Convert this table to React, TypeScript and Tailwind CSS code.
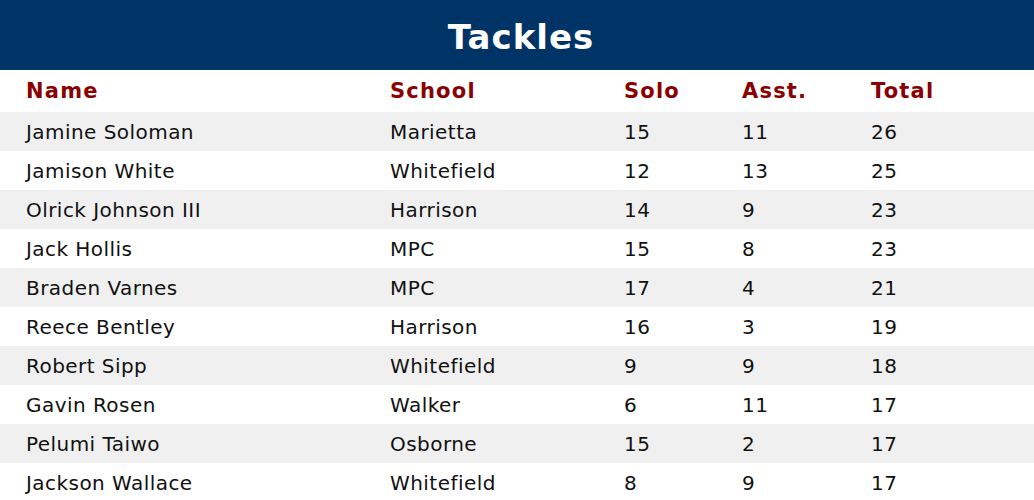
const rows = [
  ["Jamine Soloman", "Marietta", "15", "11", "26"],
  ["Jamison White", "Whitefield", "12", "13", "25"],
  ["Olrick Johnson III", "Harrison", "14", "9", "23"],
  ["Jack Hollis", "MPC", "15", "8", "23"],
  ["Braden Varnes", "MPC", "17", "4", "21"],
  ["Reece Bentley", "Harrison", "16", "3", "19"],
  ["Robert Sipp", "Whitefield", "9", "9", "18"],
  ["Gavin Rosen", "Walker", "6", "11", "17"],
  ["Pelumi Taiwo", "Osborne", "15", "2", "17"],
  ["Jackson Wallace", "Whitefield", "8", "9", "17"],
];

const headers = ["Name", "School", "Solo", "Asst.", "Total"];

export default function App() {
  return (
    <div className="w-[1034px] bg-white font-['DejaVu_Sans',sans-serif]">
      <div className="h-[70px] bg-[#003366] flex items-center justify-center pt-[3px] pl-[8px]">
        <h1 className="text-white font-bold text-[34px] tracking-[1px] leading-none">Tackles</h1>
      </div>
      <table className="w-full border-collapse table-fixed">
        <colgroup>
          <col className="w-[390px]" />
          <col className="w-[234px]" />
          <col className="w-[118px]" />
          <col className="w-[129px]" />
          <col />
        </colgroup>
        <thead>
          <tr className="h-[42px]">
            {headers.map((h, i) => (
              <th
                key={h}
                className={`text-left font-bold text-[21px] tracking-[1.2px] text-[#8b0000] pt-[2px] ${i === 0 ? "pl-[26px]" : ""}`}
              >
                {h}
              </th>
            ))}
          </tr>
        </thead>
        <tbody>
          {rows.map((r, idx) => (
            <tr key={r[0]} className={`h-[39px] ${idx % 2 === 0 ? "bg-[#f0f0f0]" : "bg-white"}`}>
              {r.map((c, i) => (
                <td key={i} className={`text-[20px] tracking-[0.45px] text-[#111] ${i === 0 ? "pl-[26px]" : ""}`}>
                  {c}
                </td>
              ))}
            </tr>
          ))}
        </tbody>
      </table>
    </div>
  );
}
